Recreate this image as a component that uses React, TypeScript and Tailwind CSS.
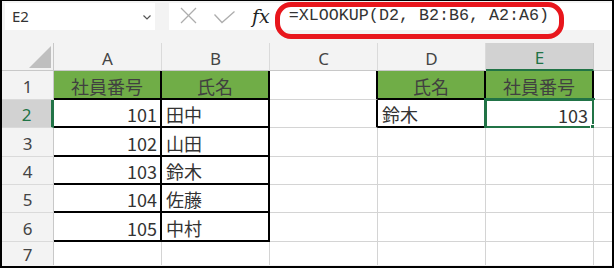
import React from "react";

type Side = "g" | "k" | "n";

const RIGHT: Record<Side, string> = {
  g: "border-r border-r-[#D4D4D4]",
  k: "border-r-2 border-r-black",
  n: "",
};
const BOTTOM: Record<Side, string> = {
  g: "border-b border-b-[#D4D4D4]",
  k: "border-b-2 border-b-black",
  n: "",
};

type CellDef = {
  t?: string;
  align?: "l" | "r" | "c";
  green?: boolean;
  r: Side;
  b: Side;
  sel?: boolean;
};

const cellFont = {
  fontFamily: '"Noto Sans CJK JP", "Noto Sans", sans-serif',
};

function Cell({ d }: { d: CellDef }) {
  const align =
    d.align === "r"
      ? d.sel
        ? "justify-end pr-[5px]"
        : "justify-end pr-[3px]"
      : d.align === "c"
      ? "justify-center"
      : "justify-start pl-[4px]";
  const bg = d.green ? "bg-[#70AD47] text-[#404040]" : "bg-white text-[#333333]";
  return (
    <div
      className={`relative flex items-center overflow-visible text-[18px] leading-none ${align} ${bg} ${RIGHT[d.r]} ${BOTTOM[d.b]}`}
      style={cellFont}
    >
      <span className="relative top-[1px]">{d.t}</span>
      {d.sel && (
        <>
          <div className="pointer-events-none absolute -left-[2px] -top-[2px] -right-[2px] -bottom-[2px] border-[3px] border-[#217346]" />
          <div className="absolute -right-[4px] -bottom-[4px] h-[7px] w-[7px] border border-white bg-[#217346]" />
        </>
      )}
    </div>
  );
}

function RowHead({ n, sel, last }: { n: number; sel?: boolean; last?: boolean }) {
  return (
    <div
      className={`flex items-center justify-center text-[17px] leading-none ${
        sel
          ? "bg-[#D2D2D2] text-[#217346] border-r-[3px] border-r-[#217346]"
          : "bg-[#F3F3F3] text-[#444444] border-r border-r-[#C8C8C8]"
      } ${last ? "" : "border-b border-b-[#DADADA]"}`}
      style={{ fontFamily: '"Noto Sans", sans-serif' }}
    >
      <span className="relative top-[1px]">{n}</span>
    </div>
  );
}

function ColHead({ l, sel }: { l: string; sel?: boolean }) {
  return (
    <div
      className={`flex items-center justify-center pt-[3px] text-[17px] leading-none ${
        sel
          ? "bg-[#D2D2D2] text-[#217346] border-b-2 border-b-[#217346] border-r border-r-[#C8C8C8]"
          : "bg-[#F3F3F3] text-[#444444] border-b border-b-[#C8C8C8] border-r border-r-[#DADADA]"
      }`}
      style={{ fontFamily: '"Noto Sans", sans-serif' }}
    >
      {l}
    </div>
  );
}

const rows: CellDef[][] = [
  [
    { t: "社員番号", align: "c", green: true, r: "k", b: "k" },
    { t: "氏名", align: "c", green: true, r: "k", b: "k" },
    { r: "k", b: "g" },
    { t: "氏名", align: "c", green: true, r: "k", b: "k" },
    { t: "社員番号", align: "c", green: true, r: "k", b: "k" },
    { r: "n", b: "g" },
  ],
  [
    { t: "101", align: "r", r: "k", b: "k" },
    { t: "田中", r: "k", b: "k" },
    { r: "k", b: "g" },
    { t: "鈴木", r: "k", b: "k" },
    { t: "103", align: "r", r: "g", b: "g", sel: true },
    { r: "n", b: "g" },
  ],
  [
    { t: "102", align: "r", r: "k", b: "k" },
    { t: "山田", r: "k", b: "k" },
    { r: "g", b: "g" },
    { r: "g", b: "g" },
    { r: "g", b: "g" },
    { r: "n", b: "g" },
  ],
  [
    { t: "103", align: "r", r: "k", b: "k" },
    { t: "鈴木", r: "k", b: "k" },
    { r: "g", b: "g" },
    { r: "g", b: "g" },
    { r: "g", b: "g" },
    { r: "n", b: "g" },
  ],
  [
    { t: "104", align: "r", r: "k", b: "k" },
    { t: "佐藤", r: "k", b: "k" },
    { r: "g", b: "g" },
    { r: "g", b: "g" },
    { r: "g", b: "g" },
    { r: "n", b: "g" },
  ],
  [
    { t: "105", align: "r", r: "k", b: "k" },
    { t: "中村", r: "k", b: "k" },
    { r: "g", b: "g" },
    { r: "g", b: "g" },
    { r: "g", b: "g" },
    { r: "n", b: "g" },
  ],
  [
    { r: "g", b: "n" },
    { r: "g", b: "n" },
    { r: "g", b: "n" },
    { r: "g", b: "n" },
    { r: "g", b: "n" },
    { r: "n", b: "n" },
  ],
];

export default function App() {
  return (
    <div className="h-[270px] w-[614px] bg-white">
      <div className="relative flex h-[268px] w-[614px] flex-col overflow-hidden border-x-2 border-b-2 border-t border-black bg-[#F3F3F3]">
        {/* Formula bar */}
        <div className="flex h-[42px] shrink-0 items-start pt-[2px]">
          <div
            className="ml-[3px] flex h-[27px] w-[150px] items-center justify-between bg-white pl-[7px] pr-[4px] text-[15px] text-[#333333]"
            style={{ fontFamily: '"Noto Sans", sans-serif' }}
          >
            <span>E2</span>
            <svg width="8" height="5" viewBox="0 0 8 5" className="mt-[1px]">
              <polyline points="0.5,0.5 4,4 7.5,0.5" fill="none" stroke="#555" strokeWidth="1.2" />
            </svg>
          </div>
          <div className="ml-[14px] flex h-[27px] flex-1 items-center bg-white pl-[11px]">
            <svg width="17" height="17" viewBox="0 0 17 17" className="-mt-[2px]">
              <line x1="1" y1="1" x2="16" y2="16" stroke="#ADADAD" strokeWidth="1.3" />
              <line x1="16" y1="1" x2="1" y2="16" stroke="#ADADAD" strokeWidth="1.3" />
            </svg>
            <svg width="21" height="13" viewBox="0 0 21 13" className="ml-[17px] mt-[2px]">
              <polyline points="0.5,3.5 8,11.5 20.5,0.5" fill="none" stroke="#ADADAD" strokeWidth="1.3" />
            </svg>
            <span
              className="ml-[17px] text-[19px] italic leading-none text-[#222222]"
              style={{ fontFamily: '"DejaVu Serif", "Liberation Serif", serif' }}
            >
              fx
            </span>
            <span
              className="ml-[19px] whitespace-pre text-[16.7px] leading-none text-[#333333]"
              style={{ fontFamily: '"Liberation Mono", "DejaVu Sans Mono", monospace' }}
            >
              =XLOOKUP(D2, B2:B6, A2:A6)
            </span>
          </div>
        </div>

        {/* Grid */}
        <div className="grid grid-cols-[52px_108px_108px_108px_108px_108px_18px] grid-rows-[28px_29px_28px_29px_28px_28px_29px_23px]">
          <div className="relative border-b border-b-[#C8C8C8] border-r border-r-[#C8C8C8] bg-[#F3F3F3]">
            <svg width="52" height="28" viewBox="0 0 52 28" className="absolute left-0 top-0">
              <polygon points="49,3 49,25 27,25" fill="#BFBFBF" />
            </svg>
          </div>
          <ColHead l="A" />
          <ColHead l="B" />
          <ColHead l="C" />
          <ColHead l="D" />
          <ColHead l="E" sel />
          <div className="border-b border-b-[#C8C8C8] bg-[#F3F3F3]" />

          {rows.map((row, i) => (
            <React.Fragment key={i}>
              <RowHead n={i + 1} sel={i === 1} last={i === 6} />
              {row.map((d, j) => (
                <Cell key={j} d={d} />
              ))}
            </React.Fragment>
          ))}
        </div>

        {/* Red annotation oval */}
        <div className="pointer-events-none absolute left-[273px] top-[1px] h-[37px] w-[289px] rounded-[16px] border-[5px] border-[#E8161C]" />
      </div>
    </div>
  );
}
